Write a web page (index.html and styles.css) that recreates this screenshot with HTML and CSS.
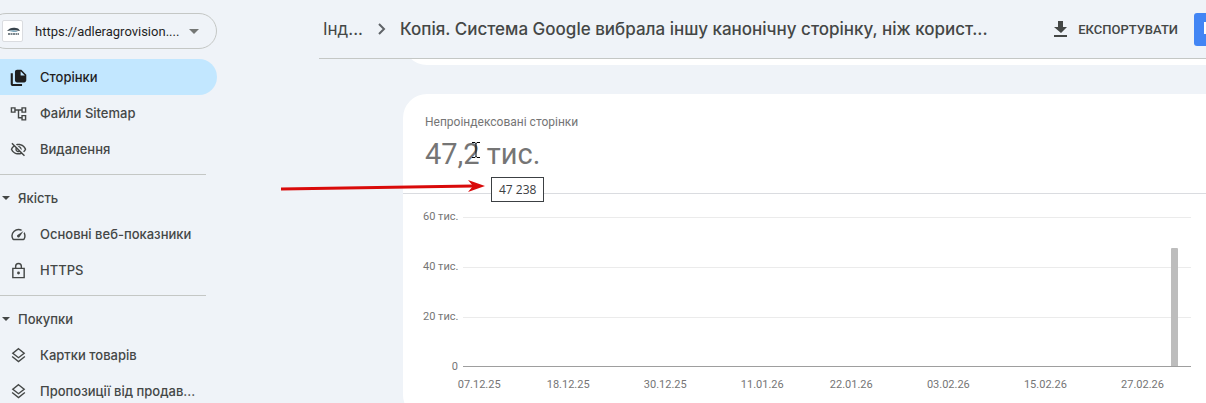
FILE: index.html
```html
<!DOCTYPE html>
<html lang="uk">
<head>
  <meta charset="UTF-8">
  <meta name="viewport" content="width=device-width, initial-scale=1.0">
  <title>Непроіндексовані сторінки</title>
  <link rel="stylesheet" href="styles.css">
</head>
<body>
  <div class="page">
    <aside class="sidebar">
      <div class="property">
        <span class="property-logo">
          <svg viewBox="0 0 20 20" width="20" height="20">
            <path d="M4 10c2-3 6-4 9-3 2 0 3 1 4 3-4-1-8-1-13 0z" fill="#39444c"/>
            <path d="M6 10c3-1 6-1 9 1-3 0-6 0-9-1z" fill="#7fa9bd"/>
            <path d="M5 13h11" stroke="#7b858b" stroke-width="2" stroke-dasharray="2 .5"/>
          </svg>
        </span>
        <select class="property-select" aria-label="Ресурс">
          <option>https://adleragrovision....</option>
        </select>
        <svg class="property-arrow" viewBox="0 0 10 5" width="10" height="5"><path d="M0 0h10L5 5z"/></svg>
      </div>

      <nav class="nav">
        <a class="nav-item active" href="#">
          <svg class="icon" viewBox="0 0 24 24"><path d="M16 1H10C8.300 1 7 2.300 7 4v12c0 1.700 1.300 3 3 3h10c1.700 0 3-1.300 3-3V8zM15 9V3l6 6zM1 6h3v15h13v3H4c-1.700 0-3-1.300-3-3z"/></svg>
          Сторінки
        </a>
        <a class="nav-item" href="#">
          <svg class="icon line" viewBox="0 0 24 24"><path d="M2 4h5v6H2zM17 4h5v6h-5zM17 15h5v6h-5zM7 7h10M12 7v11h5"/></svg>
          Файли Sitemap
        </a>
        <a class="nav-item" href="#">
          <svg class="icon" viewBox="0 0 24 24"><path d="M12 6a9.770 9.770 0 0 1 8.820 5.500 9.647 9.647 0 0 1-2.410 3.120l1.410 1.410c1.390-1.230 2.490-2.770 3.180-4.530C21.270 7.110 17 4 12 4c-1.270 0-2.490.2-3.640.57l1.650 1.650C10.660 6.090 11.320 6 12 6zm-1.070 1.140L13 9.210c.57.250 1.030.710 1.280 1.280l2.070 2.070c.080-.340.140-.700.140-1.070C16.500 9.010 14.480 7 12 7c-.370 0-.720.050-1.070.140zM2.010 3.870l2.680 2.680A11.738 11.738 0 0 0 1 11.500C2.730 15.890 7 19 12 19c1.520 0 2.980-.290 4.320-.820l3.420 3.420 1.410-1.410L3.420 2.450 2.010 3.870zm7.500 7.500l2.610 2.610c-.040.010-.080.020-.120.020a2.500 2.500 0 0 1-2.500-2.500c0-.050.010-.080.010-.130zm-3.400-3.400l1.750 1.750a4.600 4.600 0 0 0-.360 1.780 4.507 4.507 0 0 0 6.270 4.140l.98.98c-.88.240-1.800.380-2.750.380a9.770 9.770 0 0 1-8.820-5.500c.7-1.430 1.720-2.610 2.930-3.530z"/></svg>
          Видалення
        </a>
      </nav>

      <nav class="nav">
        <button class="nav-group" type="button"><svg viewBox="0 0 8 4" width="8" height="4"><path d="M0 0h8L4 4z"/></svg>Якість</button>
        <a class="nav-item" href="#">
          <svg class="icon" viewBox="0 0 24 24"><path d="M20.380 8.570l-1.230 1.850a8 8 0 0 1-.220 7.580H5.070A8 8 0 0 1 15.580 6.850l1.850-1.230A10 10 0 0 0 3.350 19a2 2 0 0 0 1.720 1h13.850a2 2 0 0 0 1.740-1 10 10 0 0 0-.270-10.440zm-9.790 6.840a2 2 0 0 0 2.830 0l5.660-8.490-8.490 5.660a2 2 0 0 0 0 2.830z"/></svg>
          Основні веб-показники
        </a>
        <a class="nav-item" href="#">
          <svg class="icon line" viewBox="0 0 24 24"><path d="M4 9h16v13H4zM8 9V6a4 4 0 0 1 8 0v3"/><circle cx="12" cy="15.500" r="1"/></svg>
          HTTPS
        </a>
      </nav>

      <nav class="nav">
        <button class="nav-group" type="button"><svg viewBox="0 0 8 4" width="8" height="4"><path d="M0 0h8L4 4z"/></svg>Покупки</button>
        <a class="nav-item" href="#">
          <svg class="icon line" viewBox="0 0 24 24"><path d="M12 2.500l8 6.300-8 6.300-8-6.300zM3 13.500l9 7 9-7"/></svg>
          Картки товарів
        </a>
        <a class="nav-item" href="#">
          <svg class="icon line" viewBox="0 0 24 24"><path d="M12 2.500l8 6.300-8 6.300-8-6.300zM3 13.500l9 7 9-7"/></svg>
          Пропозиції від продав...
        </a>
      </nav>
    </aside>

    <main class="main">
      <header class="header">
        <a class="crumb" href="#">Інд...</a>
        <svg class="chevron" viewBox="0 0 8 12" width="8" height="12"><path d="M1 1l5 5-5 5"/></svg>
        <h1 class="title">Копія. Система Google вибрала іншу канонічну сторінку, ніж корист...</h1>
        <button class="export" type="button">
          <svg viewBox="0 0 14 16" width="14" height="16"><path d="M4 0h5v6h4l-6 6-7-6h4zM0 14h13v2H0z"/></svg>
          ЕКСПОРТУВАТИ
        </button>
        <button class="share" type="button" aria-label="Поділитися">
          <svg viewBox="0 0 16 16" width="16" height="16"><path d="M1 4h14v10H1z"/></svg>
        </button>
      </header>

      <div class="content">
        <section class="card card-prev"></section>
        <section class="card">
          <div class="summary">
            <h2 class="summary-label">Непроіндексовані сторінки</h2>
            <p class="summary-value">
              47,2 тис.
              <svg class="cursor" viewBox="0 0 8 16" width="8" height="16"><path d="M0 .5h3l1 1 1-1h3M4 1v14M0 15.500h3l1-1 1 1h3"/></svg>
            </p>
            <span class="tooltip" role="tooltip">47 238</span>
            <svg class="pointer" viewBox="0 0 204 14" width="204" height="14">
              <path d="M0 9l192-3" stroke="#d90a0a" stroke-width="3"/>
              <path d="M187 0l17 6-17 6 5-6z" fill="#d90a0a"/>
            </svg>
          </div>
          <div class="chart">
            <div class="y-axis">
              <span>60 тис.</span>
              <span>40 тис.</span>
              <span>20 тис.</span>
              <span>0</span>
            </div>
            <div class="plot">
              <div class="lines"><i></i><i></i><i></i></div>
              <!-- one column per day -->
              <div class="days bars">
                <div class="bar" style="grid-column: 88 / span 2; height: 79%"></div>
              </div>
              <div class="days dates">
                <span style="grid-column: 2 / span 2">07.12.25</span>
                <span style="grid-column: 13 / span 2">18.12.25</span>
                <span style="grid-column: 25 / span 2">30.12.25</span>
                <span style="grid-column: 37 / span 2">11.01.26</span>
                <span style="grid-column: 48 / span 2">22.01.26</span>
                <span style="grid-column: 60 / span 2">03.02.26</span>
                <span style="grid-column: 72 / span 2">15.02.26</span>
                <span style="grid-column: 84 / span 2">27.02.26</span>
              </div>
            </div>
          </div>
        </section>
      </div>
    </main>
  </div>
</body>
</html>
```

FILE: styles.css
```css
* {
  box-sizing: border-box;
  margin: 0;
  padding: 0;
}
body {
  background: #eff3f8;
  color: #444746;
  font-family: Roboto, "Liberation Sans", sans-serif;
}
button,
select {
  border: 0;
  background: none;
  color: inherit;
  font: inherit;
}
a {
  color: inherit;
  text-decoration: none;
}
svg {
  flex: none;
}
.page {
  display: flex;
  height: 100vh;
  overflow: hidden;
}

/* sidebar */
.sidebar {
  flex: none;
  width: 217px;
  margin-right: 102px;
  padding-top: 13px;
  font-family: Inter, "Liberation Sans", sans-serif;
  font-size: 13px;
}
.property {
  display: flex;
  align-items: center;
  height: 36px;
  margin: 0 0 10px -12px;
  padding: 0 17px 0 13px;
  border: 1px solid #c4c7c5;
  border-radius: 18px;
}
.property-logo {
  display: flex;
  flex: none;
  width: 21px;
  height: 22px;
  border: 1px solid #dadce0;
  border-radius: 2px;
  background: #fff;
}
.property-select {
  flex: 1;
  min-width: 0;
  margin-left: 12px;
  appearance: none;
  color: #1f1f1f;
  font-family: Roboto, "Liberation Sans", sans-serif;
}
.property-arrow {
  fill: #747775;
}
.nav + .nav::before {
  content: "";
  display: block;
  height: 1px;
  margin: 7px 11px 5px 0;
  background: #c4c7c5;
}
.nav-item {
  display: flex;
  align-items: center;
  gap: 13px;
  height: 36px;
  padding-left: 10px;
  border-radius: 0 18px 18px 0;
  font-weight: 500;
  white-space: nowrap;
}
.nav-item.active {
  background: #c2e7ff;
  color: #1f1f1f;
}
.nav-group {
  display: flex;
  align-items: center;
  gap: 8px;
  height: 36px;
  padding-left: 2px;
  font-weight: 500;
}
.nav-group svg {
  fill: #444746;
}
.icon {
  width: 17px;
  height: 17px;
  fill: currentColor;
}
.icon.line {
  fill: none;
  stroke: currentColor;
  stroke-width: 2;
}

/* header */
.main {
  display: flex;
  flex: 1;
  flex-direction: column;
  min-width: 0;
}
.header {
  position: relative;
  z-index: 1;
  display: flex;
  flex: none;
  align-items: center;
  height: 59px;
  padding-left: 4px;
  border-bottom: 1px solid #c4c7c5;
  background: #eff3f8;
  font-family: Inter, Roboto, sans-serif;
  font-size: 17px;
  overflow: hidden;
}
.crumb {
  flex: none;
}
.chevron {
  margin: 0 14px 0 15px;
  fill: none;
  stroke: #5f6368;
  stroke-width: 2;
}
.title {
  flex: 1;
  min-width: 0;
  font-size: 17px;
  font-weight: 500;
  white-space: nowrap;
}
.export {
  display: flex;
  flex: none;
  align-items: center;
  gap: 10px;
  margin-right: 16px;
  font-family: Roboto, sans-serif;
  font-size: 13px;
  font-weight: 500;
}
.export svg {
  fill: #444746;
}
.share {
  flex: none;
  width: 36px;
  height: 33px;
  margin-right: -24px;
  border-radius: 3px;
  background: #4285f4;
}
.share svg {
  fill: none;
  stroke: #fff;
  stroke-width: 2;
}

/* cards */
.content {
  padding-left: 84px;
}
.card {
  border-radius: 24px 0 0 24px;
  background: #fff;
}
.card-prev {
  height: 48px;
  margin: -42px 0 29px;
}
.summary {
  position: relative;
  height: 100px;
  padding: 20px 22px;
  border-bottom: 1px solid #dadce0;
  color: #757575;
}
.summary-label {
  font-size: 12px;
  font-weight: 400;
  line-height: 16px;
}
.summary-value {
  margin-top: 6px;
  font-size: 29px;
  line-height: 36px;
}
.cursor {
  position: absolute;
  top: 48px;
  left: 69px;
  fill: none;
  stroke: #000;
}
.tooltip {
  position: absolute;
  top: 83px;
  left: 88px;
  padding: 3px 7px;
  border: 1px solid #3c4043;
  background: #fff;
  color: #3c4043;
  font-family: "Open Sans", sans-serif;
  font-size: 12px;
  line-height: 17px;
}
.pointer {
  position: absolute;
  top: 86px;
  right: 100%;
  margin-right: -82px;
}

/* chart */
.chart {
  display: flex;
  gap: 5px;
  padding: 23px 15px 26px 20px;
  color: #757575;
  font-size: 11px;
  line-height: 16px;
}
.y-axis {
  display: flex;
  flex: none;
  flex-direction: column;
  justify-content: space-between;
  width: 35px;
  height: 166px;
  margin-top: -8px;
  text-align: right;
  white-space: nowrap;
}
.plot {
  position: relative;
  flex: 1;
  min-width: 0;
}
.lines {
  height: 150px;
  border-bottom: 1px solid #9e9e9e;
}
.lines i {
  display: block;
  height: 50px;
  border-top: 1px solid #ebebeb;
}
.days {
  display: grid;
  grid-template-columns: repeat(90, minmax(0, 1fr));
}
.bars {
  position: absolute;
  top: 0;
  right: 0;
  left: 0;
  grid-template-rows: 149px;
  align-items: end;
}
.bar {
  justify-self: center;
  width: 7px;
  border-radius: 1px 1px 0 0;
  background: #bdbdbd;
}
.dates {
  padding-top: 10px;
}
.dates span {
  justify-self: center;
}
```
